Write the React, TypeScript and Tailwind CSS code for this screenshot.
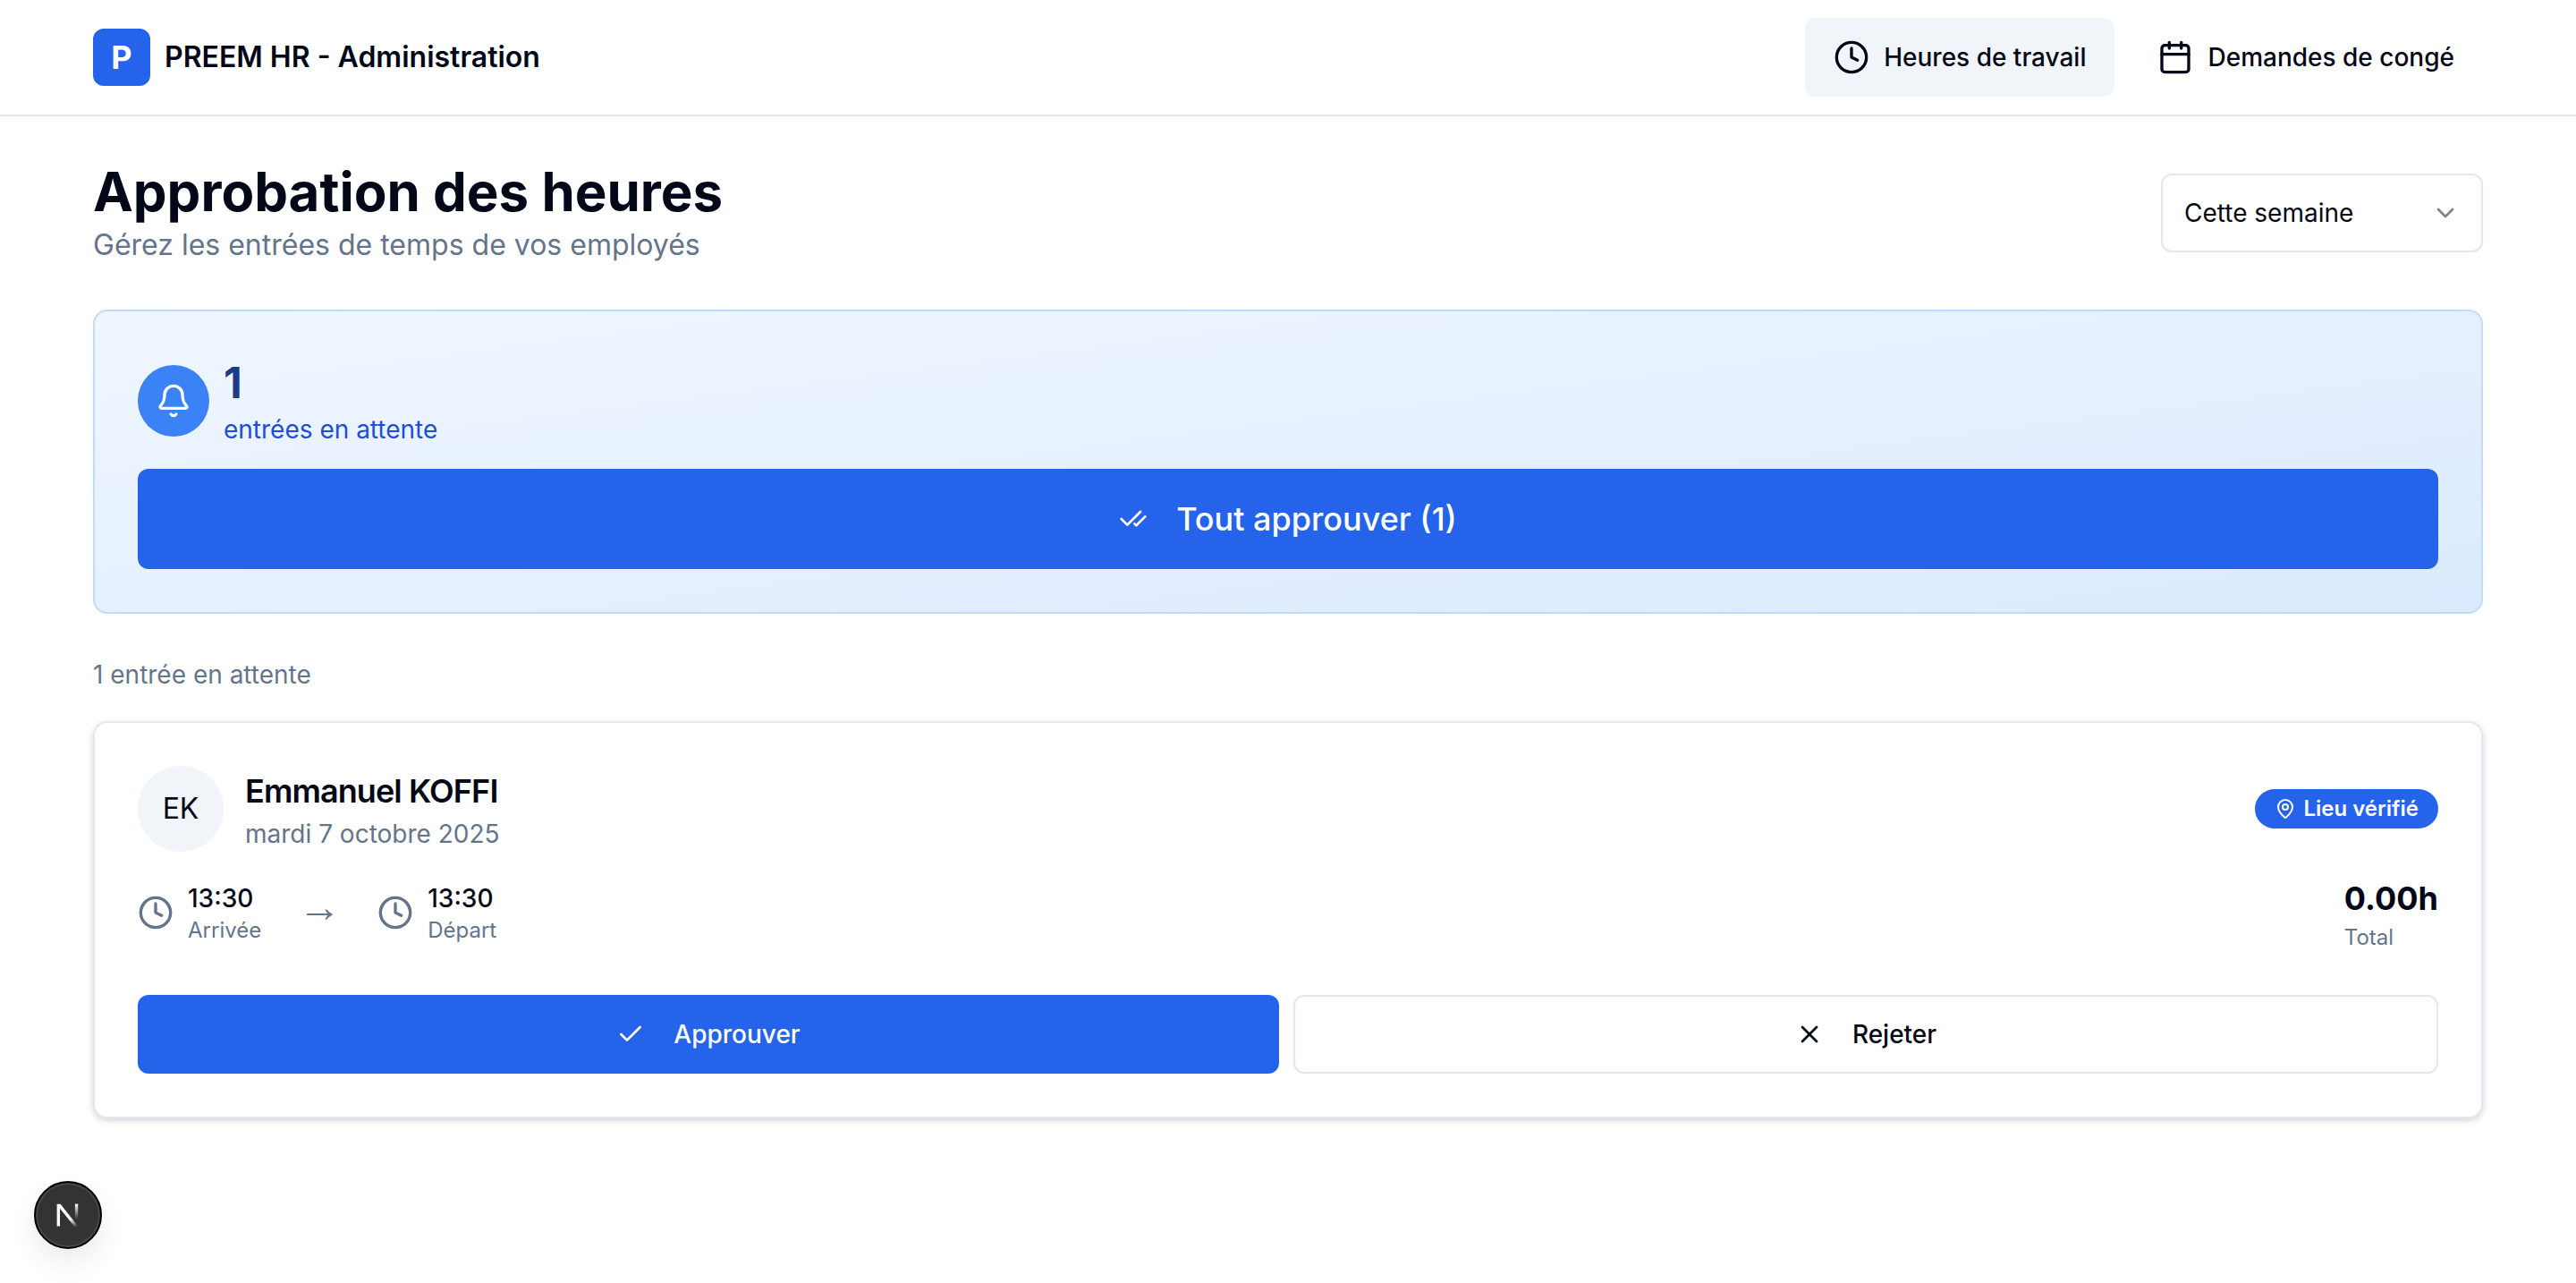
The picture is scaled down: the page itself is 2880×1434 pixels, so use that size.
import { Bell, Calendar, Check, CheckCheck, ChevronDown, Clock, MapPin, X } from 'lucide-react'

function TimeBlock({ time, label }: { time: string; label: string }) {
  return (
    <div className="flex items-center gap-4">
      <Clock size={40} strokeWidth={2} className="text-[#64748b]" />
      <div>
        <p className="text-[28px] leading-[40px] font-medium text-[#020817]">{time}</p>
        <p className="text-[24px] leading-[32px] text-[#64748b]">{label}</p>
      </div>
    </div>
  )
}

export default function App() {
  return (
    <div className="min-h-[1434px] bg-white text-[#020817] font-['Inter',sans-serif] relative">
      <header className="h-[130px] border-b-2 border-[#e2e8f0] px-[104px] flex items-center justify-between">
        <div className="flex items-center gap-4">
          <div className="w-16 h-16 rounded-xl bg-[#2563eb] flex items-center justify-center text-white text-[36px] font-bold">P</div>
          <span className="text-[32px] leading-[48px] font-semibold">PREEM HR - Administration</span>
        </div>
        <nav className="flex items-center gap-4 text-[28px] font-medium">
          <a className="h-[88px] px-8 flex items-center gap-4 rounded-xl bg-[#f1f5f9]">
            <Clock size={40} />
            Heures de travail
          </a>
          <a className="h-[88px] px-8 flex items-center gap-4 rounded-xl">
            <Calendar size={40} />
            Demandes de congé
          </a>
        </nav>
      </header>

      <main className="px-[104px] pt-12">
        <div className="flex items-center justify-between mb-12">
          <div>
            <h1 className="text-[60px] leading-[72px] font-bold">Approbation des heures</h1>
            <p className="text-[32px] leading-[48px] text-[#64748b]">Gérez les entrées de temps de vos employés</p>
          </div>
          <button className="w-[360px] h-[88px] px-6 rounded-xl border-2 border-[#e2e8f0] flex items-center justify-between text-[28px]">
            Cette semaine
            <ChevronDown size={32} className="text-[#020817] opacity-50" />
          </button>
        </div>

        <section className="rounded-2xl border-2 border-[#bfdbfe] bg-gradient-to-br from-[#eff6ff] to-[#dbeafe] p-12 flex flex-col gap-6 mb-12">
          <div className="flex items-center gap-4">
            <div className="w-20 h-20 rounded-full bg-[#3b82f6] flex items-center justify-center">
              <Bell size={40} className="text-white" />
            </div>
            <div>
              <p className="text-[48px] leading-[64px] font-bold text-[#1e3a8a]">1</p>
              <p className="text-[28px] leading-[40px] text-[#1d4ed8]">entrées en attente</p>
            </div>
          </div>
          <button className="h-[112px] rounded-xl bg-[#2563eb] text-white text-[36px] font-medium flex items-center justify-center gap-8">
            <CheckCheck size={32} />
            Tout approuver (1)
          </button>
        </section>

        <p className="text-[28px] leading-[40px] text-[#64748b] mb-8">1 entrée en attente</p>

        <section className="rounded-2xl border-2 border-[#e2e8f0] bg-white p-12 shadow-[0_2px_6px_rgba(0,0,0,0.12),0_4px_12px_rgba(0,0,0,0.06)]">
          <div className="flex items-start justify-between">
            <div className="flex items-center gap-6">
              <div className="w-24 h-24 rounded-full bg-[#f1f5f9] flex items-center justify-center text-[32px]">EK</div>
              <div>
                <p className="text-[36px] leading-[56px] font-semibold tracking-tight">Emmanuel KOFFI</p>
                <p className="text-[28px] leading-[40px] text-[#64748b]">mardi 7 octobre 2025</p>
              </div>
            </div>
            <div className="mt-[26px] h-[44px] px-[22px] rounded-full bg-[#2563eb] text-white text-[24px] font-semibold flex items-center gap-2">
              <MapPin size={24} />
              Lieu vérifié
            </div>
          </div>

          <div className="mt-6 h-[88px] flex items-center justify-between">
            <div className="flex items-center">
              <TimeBlock time="13:30" label="Arrivée" />
              <div className="w-[130px] text-center text-[48px] leading-[48px] pb-[12px] text-[#64748b] font-['Liberation_Sans',sans-serif]">→</div>
              <TimeBlock time="13:30" label="Départ" />
            </div>
            <div>
              <p className="text-[36px] leading-[56px] font-bold">0.00h</p>
              <p className="text-[24px] leading-[32px] text-[#64748b]">Total</p>
            </div>
          </div>

          <div className="mt-12 flex gap-4">
            <button className="w-[1276px] h-[88px] rounded-xl bg-[#2563eb] text-white text-[28px] font-medium flex items-center justify-center gap-8">
              <Check size={32} />
              Approuver
            </button>
            <button className="flex-1 h-[88px] rounded-xl border-2 border-[#e2e8f0] bg-white text-[28px] font-medium flex items-center justify-center gap-8">
              <X size={32} />
              Rejeter
            </button>
          </div>
        </section>
      </main>

      <div className="absolute left-[38px] top-[1320px] w-[76px] h-[76px] rounded-full bg-[#333] border-2 border-black shadow-[0_16px_32px_rgba(0,0,0,0.08),inset_0_0_0_2px_rgba(255,255,255,0.1)] flex items-center justify-center">
        <svg width="36" height="36" viewBox="0 0 32 32" fill="none">
          <defs>
            <linearGradient id="nextA" x1="16" y1="10" x2="26" y2="27" gradientUnits="userSpaceOnUse">
              <stop offset="0.5" stopColor="#fff" />
              <stop offset="1" stopColor="#fff" stopOpacity="0" />
            </linearGradient>
            <linearGradient id="nextB" x1="25" y1="5" x2="25" y2="20" gradientUnits="userSpaceOnUse">
              <stop stopColor="#fff" />
              <stop offset="1" stopColor="#fff" stopOpacity="0" />
            </linearGradient>
          </defs>
          <path d="M5 5h3.5L27 28.5l-2.5 1.5L8 9.5V27H5z" fill="url(#nextA)" />
          <rect x="23" y="5" width="3" height="17" fill="url(#nextB)" />
        </svg>
      </div>
    </div>
  )
}
